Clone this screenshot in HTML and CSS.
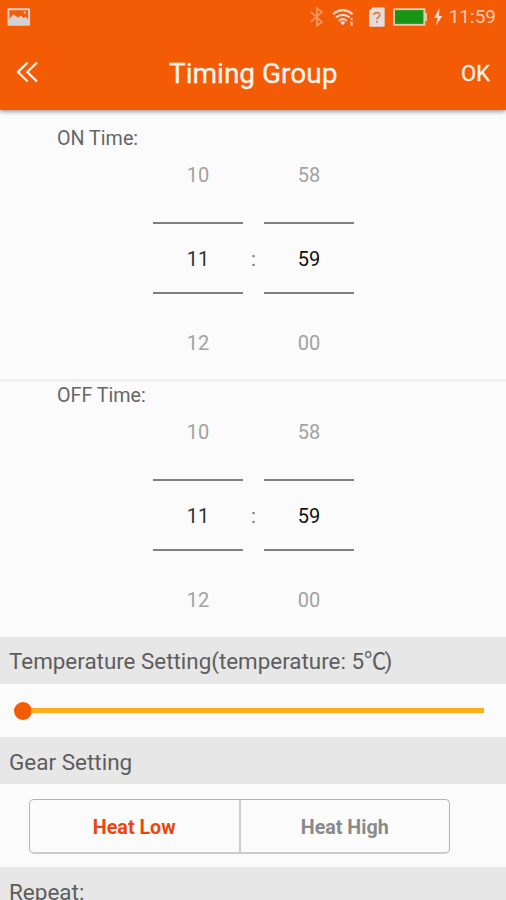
FILE: index.html
```html
<!DOCTYPE html>
<html lang="en">
<head>
<meta charset="utf-8">
<title>Timing Group</title>
<link rel="stylesheet" href="styles.css">
</head>
<body>
<header class="header">
  <div class="status">
    <svg class="picture" width="24" height="19" viewBox="0 0 24 19"><path fill="#d4cfd0" fill-rule="evenodd" d="M1.500 0h21q1 0 1 1v16q0 1-1 1h-21q-1 0-1-1V1q0-1 1-1zM2.500 2v9l4-5 4.500 3.500 3-2 3 2.500 2-1.500 2.500 3V2zM17 3.500h2v2h-2z"/></svg>
    <svg class="bluetooth" width="15" height="20" viewBox="0 0 15 20"><path fill="none" stroke="#f8975f" stroke-width="1.800" d="M1 5l11 10-5 4V1l5 4L1 15"/></svg>
    <svg class="wifi" width="23" height="18" viewBox="0 0 23 18"><g fill="none" stroke="#efd6cc" stroke-width="2.200"><path d="M1 6Q11 -2 21 6M4 9.500Q11 4 18 9.500M7 13Q11 9.500 15 13"/></g><path fill="#efd6cc" d="M8.500 14.500Q11 12 13.500 14.500L11 17.500zM19 10h2v2h-2zM19 13.500h2V18h-2z"/></svg>
    <svg class="sim" width="16" height="20" viewBox="0 0 16 20"><path fill="#e3dedd" d="M4 0h10.500Q16 0 16 1.500v17Q16 20 14.500 20h-13Q0 20 0 18.500V4z"/><path fill="none" stroke="#e8783f" stroke-width="1.700" d="M5 8q0-2.500 3-2.500t3 2.300q0 1.500-1.500 2.400T8 12.500M8 14v1.800"/></svg>
    <svg class="battery" width="35" height="18" viewBox="0 0 35 18"><path fill="#e6c9b5" d="M0 0h33v5h2v8h-2v5H0z"/><path fill="#159615" d="M2 2h29v14H2z"/></svg>
    <svg class="bolt" width="9" height="18" viewBox="0 0 9 18"><path fill="#eed9d0" d="M5.500 0L0 10h3.500L2 18l6.500-10H5.200z"/></svg>
    <span class="clock">11:59</span>
  </div>
  <div class="toolbar">
    <svg class="back" width="24" height="22" viewBox="0 0 24 22"><path fill="none" stroke="#fff3ec" stroke-width="2.300" d="M11.700 1.500L2 11l9.700 9.500M21 1.500L11.300 11l9.700 9.500"/></svg>
    <h1 class="title">Timing Group</h1>
    <span class="ok">OK</span>
  </div>
</header>
<section class="time">
  <div class="label">ON Time:</div>
  <div class="pickers">
    <div class="picker"><span>10</span><strong>11</strong><span>12</span></div>
    <span class="colon">:</span>
    <div class="picker"><span>58</span><strong class="dark">59</strong><span>00</span></div>
  </div>
</section>
<section class="time off">
  <div class="label">OFF Time:</div>
  <div class="pickers">
    <div class="picker"><span>10</span><strong>11</strong><span>12</span></div>
    <span class="colon">:</span>
    <div class="picker"><span>58</span><strong class="dark">59</strong><span>00</span></div>
  </div>
</section>
<h2 class="band temp">Temperature Setting(temperature: 5<span class="unit">℃</span>)</h2>
<div class="slider"><span class="thumb"></span><span class="track"></span></div>
<h2 class="band">Gear Setting</h2>
<div class="gear">
  <div class="segments"><span class="segment active">Heat Low</span><span class="segment">Heat High</span></div>
</div>
<h2 class="band">Repeat:</h2>
</body>
</html>
```
FILE: styles.css
```css
* { box-sizing: border-box; }
html { height: 900px; overflow: hidden; }
body { margin: 0; height: 900px; overflow: hidden; background: #fbfbfb; font-family: Roboto, "Noto Sans CJK SC", sans-serif; color: #5c5c5c; display: flex; flex-direction: column; }
body > * { flex-shrink: 0; }
.header { height: 110px; background: #f35b04; box-shadow: 0 1px 5px rgba(0,0,0,.5); z-index: 1; color: #fff3ec; }
.status { height: 36px; display: flex; align-items: center; padding: 0 10px 2px 7px; }
.bluetooth { margin-left: 279px; }
.wifi { margin-left: 8px; }
.sim { margin-left: 14px; }
.battery { margin-left: 8px; }
.bolt { margin-left: 7px; }
.clock { margin-left: 6px; font-size: 19px; color: #f7c9b3; line-height: 36px; white-space: nowrap; }
.toolbar { height: 74px; display: flex; align-items: center; padding: 0 16px 0 16px; }
.back { margin-top: -2px; }
.title { flex: 1; margin: 0 0 0 129px; padding-top: 2px; font-size: 28px; font-weight: 400; line-height: 74px; white-space: nowrap; -webkit-text-stroke: .3px; }
.ok { font-size: 22px; -webkit-text-stroke: .3px; }
.time { height: 270px; padding-top: 18px; font-size: 20px; }
.off { height: 257px; padding-top: 5px; position: relative; }
.off::before { content: ""; position: absolute; left: 0; right: 0; top: -1px; height: 3px; background: #f0f0f0; }
.label { height: 20px; line-height: 22px; padding-left: 57px; color: #666; font-size: 19.7px; }
.pickers { display: grid; grid-template-columns: 90px 21px 90px; width: 201px; margin-left: 153px; margin-top: -15px; text-align: center; }
.picker { display: grid; grid-template-rows: 84px 84px 84px; align-items: center; height: 252px; background: linear-gradient(#7f7f7f, #7f7f7f) 0 89px / 90px 2px no-repeat, linear-gradient(#7f7f7f, #7f7f7f) 0 159px / 90px 2px no-repeat; color: #a2a2a2; }
.picker strong { font-weight: 400; color: #333; }
.picker .dark { color: #111; }
.colon { align-self: center; color: #777; }
.band { margin: 0; height: 47px; padding-left: 9px; background: #e7e7e7; font-size: 22.5px; font-weight: 400; line-height: 50px; color: #5d5d5d; white-space: nowrap; }
.temp { line-height: 48px; font-size: 22.4px; }
.unit { letter-spacing: -2px; }
.slider { height: 53px; display: flex; align-items: center; padding: 0 22px 0 14px; }
.thumb { width: 18px; height: 18px; border-radius: 50%; background: #f35b04; }
.track { flex: 1; height: 5px; background: #fcae1e; margin-left: -1px; }
.gear { height: 83px; padding: 15px 56px 13px 29px; }
.segments { height: 55px; display: flex; border: 1px solid #b4b4b4; border-bottom: 2px solid #cbcbcb; border-radius: 5px; }
.segment { flex: 1; display: flex; align-items: center; justify-content: center; font-size: 19.7px; font-weight: 700; color: #8a8a8a; padding-top: 3px; }
.active { color: #ee4510; border-right: 2px solid #cdcdcd; }
```
